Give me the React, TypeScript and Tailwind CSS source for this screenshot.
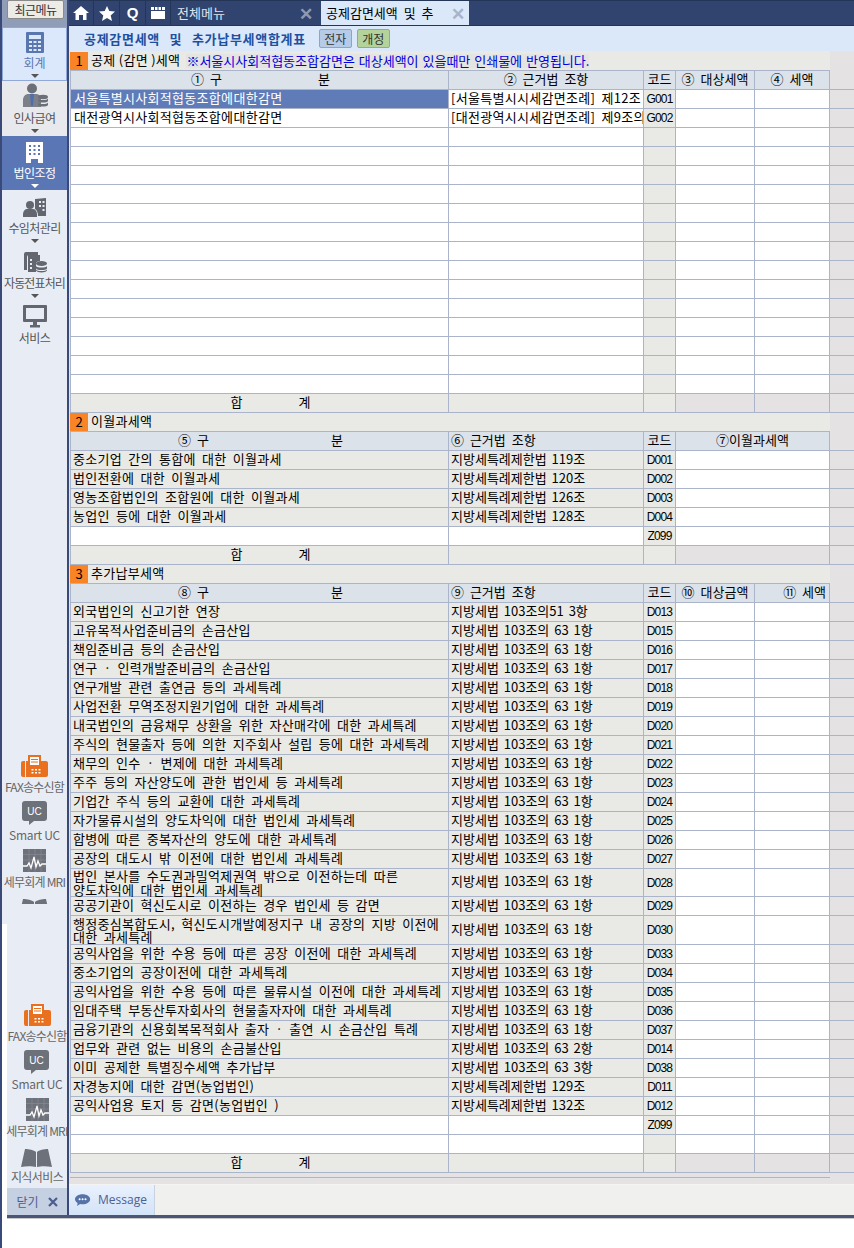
import type { ReactNode } from "react";

const font = "font-['Noto_Sans_CJK_KR','Liberation_Sans',sans-serif]";
const line = "border-[#aab4cb]";

const gamRows = [
  ["서울특별시사회적협동조합에대한감면", "[서울특별시시세감면조례] 제12조", "G001"],
  ["대전광역시사회적협동조합에대한감면", "[대전광역시시세감면조례] 제9조의", "G002"],
];

const iwolRows = [
  ["중소기업 간의 통합에 대한 이월과세", "지방세특례제한법 119조", "D001"],
  ["법인전환에 대한 이월과세", "지방세특례제한법 120조", "D002"],
  ["영농조합법인의 조합원에 대한 이월과세", "지방세특례제한법 126조", "D003"],
  ["농업인 등에 대한 이월과세", "지방세특례제한법 128조", "D004"],
];

const L1 = "지방세법 103조의 63 1항";

const chuRows: [string, string, string, number?][] = [
  ["외국법인의 신고기한 연장", "지방세법 103조의51 3항", "D013"],
  ["고유목적사업준비금의 손금산입", L1, "D015"],
  ["책임준비금 등의 손금산입", L1, "D016"],
  ["연구 · 인력개발준비금의 손금산입", L1, "D017"],
  ["연구개발 관련 출연금 등의 과세특례", L1, "D018"],
  ["사업전환 무역조정지원기업에 대한 과세특례", L1, "D019"],
  ["내국법인의 금융채무 상환을 위한 자산매각에 대한 과세특례", L1, "D020"],
  ["주식의 현물출자 등에 의한 지주회사 설립 등에 대한 과세특례", L1, "D021"],
  ["채무의 인수 · 변제에 대한 과세특례", L1, "D022"],
  ["주주 등의 자산양도에 관한 법인세 등 과세특례", L1, "D023"],
  ["기업간 주식 등의 교환에 대한 과세특례", L1, "D024"],
  ["자가물류시설의 양도차익에 대한 법인세 과세특례", L1, "D025"],
  ["합병에 따른 중복자산의 양도에 대한 과세특례", L1, "D026"],
  ["공장의 대도시 밖 이전에 대한 법인세 과세특례", L1, "D027"],
  ["법인 본사를 수도권과밀억제권역 밖으로 이전하는데 따른\n양도차익에 대한 법인세 과세특례", L1, "D028", 28],
  ["공공기관이 혁신도시로 이전하는 경우 법인세 등 감면", L1, "D029"],
  ["행정중심복합도시, 혁신도시개발예정지구 내 공장의 지방 이전에\n대한 과세특례", L1, "D030", 29],
  ["공익사업을 위한 수용 등에 따른 공장 이전에 대한 과세특례", L1, "D033"],
  ["중소기업의 공장이전에 대한 과세특례", L1, "D034"],
  ["공익사업을 위한 수용 등에 따른 물류시설 이전에 대한 과세특례", L1, "D035"],
  ["임대주택 부동산투자회사의 현물출자자에 대한 과세특례", L1, "D036"],
  ["금융기관의 신용회복목적회사 출자 · 출연 시 손금산입 특례", L1, "D037"],
  ["업무와 관련 없는 비용의 손금불산입", "지방세법 103조의 63 2항", "D014"],
  ["이미 공제한 특별징수세액 추가납부", "지방세법 103조의 63 3항", "D038"],
  ["자경농지에 대한 감면(농업법인)", "지방세특례제한법 129조", "D011"],
  ["공익사업용 토지 등 감면(농업법인 )", "지방세특례제한법 132조", "D012"],
];

function Cell({ children, className = "" }: { children?: ReactNode; className?: string }) {
  return (
    <div className={`flex items-center whitespace-nowrap border-r pb-[3px] leading-[14px] ${line} ${className}`}>
      {children}
    </div>
  );
}

function Code({ value, bg = "bg-[#e9eae5]" }: { value?: string; bg?: string }) {
  return (
    <Cell className={`${bg} justify-center pb-0! font-['Liberation_Sans',sans-serif] text-[12px] tracking-[-0.8px]`}>
      {value}
    </Cell>
  );
}

function Row({ children, h = 19 }: { children: ReactNode; h?: number }) {
  return (
    <div
      className={`grid grid-cols-[378px_195px_32px_79px_75px] border-b border-l ${line}`}
      style={{ height: h }}
    >
      {children}
    </div>
  );
}

function Section({ n, title, first, children }: { n: string; title: string; first?: boolean; children?: ReactNode }) {
  return (
    <div className={`flex w-[760px] border-b ${line} bg-[#e9eae5] ${first ? "h-[20px] pt-px" : "h-[19px]"}`}>
      <div className="flex w-[18px] items-center justify-center bg-[#f98425] text-[13px]">{n}</div>
      <div className="ml-[3px] leading-[16px] tracking-[0.3px] [word-spacing:0]">{title}</div>
      {children}
    </div>
  );
}

function HeadLabel({ left, right, gap }: { left: string; right: string; gap: string }) {
  return (
    <Cell className={`justify-center bg-[#dbe2ea] pl-[2px] ${gap}`}>
      <span>{left}</span>
      <span>{right}</span>
    </Cell>
  );
}

function TotalRow({ merged }: { merged?: boolean }) {
  return (
    <Row>
      <Cell className="justify-center gap-[56px] bg-[#e9eae5] pl-[22px]">
        <span>합</span>
        <span>계</span>
      </Cell>
      <Cell className="bg-[#e9eae5]" />
      <Cell className="bg-[#e9eae5]" />
      {merged ? (
        <Cell className="col-span-2 bg-[#e4e2e3]" />
      ) : (
        <>
          <Cell className="bg-[#e4e2e3]" />
          <Cell className="bg-[#e4e2e3]" />
        </>
      )}
    </Row>
  );
}

function Calculator() {
  return (
    <svg width="18" height="21" viewBox="0 0 18 21" fill="#5a76ae">
      <path d="M1 0h16a1 1 0 0 1 1 1v19a1 1 0 0 1-1 1H1a1 1 0 0 1-1-1V1a1 1 0 0 1 1-1z" />
      <rect x="3" y="3" width="12" height="4" fill="#dbe8fb" />
      <path
        fill="#dbe8fb"
        d="M3 9h3v2H3zM7.5 9h3v2h-3zM12 9h3v2h-3zM3 13h3v2H3zM7.5 13h3v2h-3zM12 13h3v2h-3zM3 17h3v2H3zM7.5 17h3v2h-3zM12 17h3v2h-3z"
      />
    </svg>
  );
}

function PersonCoins() {
  return (
    <svg width="26" height="25" viewBox="0 0 26 25">
      <circle cx="10" cy="5.5" r="5" fill="#6b6f78" />
      <path d="M1 24v-7c0-4 3-6 5-6h8c3 0 5 2 5 6v7z" fill="#7c8088" />
      <path d="M8 11h4l-1 12H9z" fill="#4d70ad" />
      <ellipse cx="21" cy="14" rx="5" ry="2.2" fill="#6b6f78" />
      <path d="M16 15.5c1 2 9 2 10 0v2.5c-1 2-9 2-10 0zM16 19.5c1 2 9 2 10 0V22c-1 2-9 2-10 0z" fill="#6b6f78" />
    </svg>
  );
}

function Building() {
  return (
    <svg width="17" height="21" viewBox="0 0 17 21" fill="#fff">
      <path d="M0 0h17v21h-5v-4H5v4H0z" />
      <path
        fill="#5a76b4"
        d="M3 3h2v2H3zM7.5 3h2v2h-2zM12 3h2v2h-2zM3 7h2v2H3zM7.5 7h2v2h-2zM12 7h2v2h-2zM3 11h2v2H3zM7.5 11h2v2h-2zM12 11h2v2h-2z"
      />
    </svg>
  );
}

function PersonBuilding() {
  return (
    <svg width="23" height="20" viewBox="0 0 23 20" fill="#63666e">
      <path d="M12 1l11-1v18H15c0-3-1-6-3-7z" />
      <path fill="#e8edf5" d="M16 3h2v2h-2zM19.5 3h2v2h-2zM16 7h2v2h-2zM19.5 7h2v2h-2zM19.5 11h2v2h-2z" />
      <circle cx="7" cy="7" r="4" />
      <path d="M0 19v-3c0-3 2-5 4-5h6c2 0 4 2 4 5v3z" />
    </svg>
  );
}

function FileDb() {
  return (
    <svg width="24" height="22" viewBox="0 0 24 22" fill="#63666e">
      <path d="M3 1h12v3H6a2 2 0 0 0-2 2v13H1V3a2 2 0 0 1 2-2z" />
      <path d="M5 4h12v6c-2 0-4 1-4 2v9H5z" />
      <path fill="#e8edf5" d="M7 8h2v2H7zM7 12h2v2H7zM7 16h2v2H7z" />
      <ellipse cx="18.5" cy="12.5" rx="5.5" ry="2.4" />
      <path d="M13 15c1 2 10 2 11 0v2.4c-1 2-10 2-11 0zM13 18.6c1 2 10 2 11 0v1c-1 2.6-10 2.6-11 0z" />
    </svg>
  );
}

function Monitor() {
  return (
    <svg width="24" height="23" viewBox="0 0 24 23">
      <path d="M1 0h22a1 1 0 0 1 1 1v15a1 1 0 0 1-1 1H1a1 1 0 0 1-1-1V1a1 1 0 0 1 1-1z" fill="#63666e" />
      <rect x="3" y="3" width="18" height="11" fill="#e8edf5" />
      <path d="M10 17h4v3h3v2.500H7V20h3z" fill="#63666e" />
    </svg>
  );
}

function Fax() {
  return (
    <svg width="27" height="22" viewBox="0 0 27 22">
      <path d="M0 8a2 2 0 0 1 2-2h2v16H2a2 2 0 0 1-2-2z" fill="#e8701f" />
      <path d="M5 6h2V0h13v6h5a2 2 0 0 1 2 2v12a2 2 0 0 1-2 2H5z" fill="#e8701f" />
      <path fill="#fff" d="M9 2h9v8H9zM10.500 14h2v1.500h-2zM14 14h2v1.500h-2zM17.500 14h2v1.500h-2zM10.500 17h2v1.500h-2zM14 17h2v1.500h-2zM17.500 17h2v1.500h-2z" />
      <path fill="#e8701f" d="M10 4h7v1h-7zM10 6.500h7v1h-7z" />
    </svg>
  );
}

function UcBubble() {
  return (
    <svg width="25" height="24" viewBox="0 0 25 24">
      <path d="M3 0h19a3 3 0 0 1 3 3v14a3 3 0 0 1-3 3H12l-5 4v-4H3a3 3 0 0 1-3-3V3a3 3 0 0 1 3-3z" fill="#6d717a" />
      <text x="12.500" y="14" textAnchor="middle" fontSize="10" fill="#fff" fontFamily="Liberation Sans">
        UC
      </text>
    </svg>
  );
}

function Mri() {
  return (
    <svg width="23" height="23" viewBox="0 0 23 23">
      <rect width="23" height="23" fill="#6d717a" />
      <path d="M0 5.500h23M0 11h23M0 17h23M6 0v23M12 0v23M18 0v23" stroke="#868a92" strokeWidth="0.7" />
      <path d="M0 17h4l2-3 2 5 3-11 2 10 2-6 2 5 2-2h4" fill="none" stroke="#fff" strokeWidth="1.300" />
    </svg>
  );
}

function Book({ clip }: { clip?: boolean }) {
  return (
    <div className={clip ? "h-[5px] overflow-hidden" : ""}>
      <svg width="31" height="18" viewBox="0 0 31 18" fill="#6d717a">
        <path d="M15 3c-2-2-7-3-11-3L0 18c5-1 11-1 15 0z" />
        <path d="M16 3c2-2 7-3 11-3l4 18c-5-1-11-1-15 0z" />
      </svg>
    </div>
  );
}

function NavItem({
  icon,
  label,
  arrow,
  className = "",
  arrowClass = "border-t-[#555]",
  text = "text-[#555] tracking-[-0.6px]",
}: {
  icon: ReactNode;
  label: string;
  arrow?: boolean;
  className?: string;
  arrowClass?: string;
  text?: string;
}) {
  return (
    <div className={`flex flex-col items-center ${className}`}>
      <div className="flex h-[25px] items-end justify-center">{icon}</div>
      <div className={`mt-[2px] whitespace-nowrap text-[12px] leading-[16px] ${text}`}>{label}</div>
      {arrow && <div className={`mt-[3px] h-0 w-0 border-x-[4px] border-t-[4px] border-x-transparent ${arrowClass}`} />}
    </div>
  );
}

function LowerTools({ compact }: { compact?: boolean }) {
  const grey = "text-[#666] tracking-[-0.8px]";
  return (
    <>
      <NavItem icon={<Fax />} label="FAX송수신함" text={grey} />
      <NavItem className="mt-[5px]" icon={<UcBubble />} label="Smart UC" text="text-[#666] tracking-[-0.3px]" />
      <NavItem className="mt-[4px]" icon={<Mri />} label="세무회계 MRI" text={grey} />
      {compact ? (
        <div className="mt-[9px] flex justify-center">
          <Book clip />
        </div>
      ) : (
        <NavItem className="mt-[3px]" icon={<Book />} label="지식서비스" text="text-[#666] tracking-[-0.6px]" />
      )}
    </>
  );
}

function TopIcons() {
  return (
    <div className="flex h-full text-white">
      <div className="flex w-[25px] items-center justify-center border-r border-[#233658]">
        <svg width="16" height="14" viewBox="0 0 16 14" fill="#fff">
          <path d="M8 0l8 7h-2.500v7H10V9H6v5H2.500V7H0z" />
        </svg>
      </div>
      <div className="flex w-[26px] items-center justify-center border-r border-[#233658]">
        <svg width="16" height="15" viewBox="0 0 16 15" fill="#fff">
          <path d="M8 0l2.300 5 5.700.6-4.300 3.800 1.300 5.600L8 12l-5 3 1.300-5.600L0 5.600 5.700 5z" />
        </svg>
      </div>
      <div className="flex w-[26px] items-center justify-center border-r border-[#233658] font-['Liberation_Sans',sans-serif] text-[15px] font-bold">
        Q
      </div>
      <div className="flex w-[25px] items-center justify-center border-r border-[#233658]">
        <svg width="14" height="12" viewBox="0 0 14 12" fill="#fff">
          <path d="M0 0h3v3H0zM4 0h2.500v3H4zM7.500 0H10v3H7.500zM11 0h3v3h-3zM0 4h14v8H0z" />
        </svg>
      </div>
    </div>
  );
}

export default function App() {
  return (
    <div className={`flex h-[1248px] w-[854px] overflow-hidden bg-white text-[13px] leading-[18px] text-black [word-spacing:3px] ${font}`}>
      <div className="w-[2px] shrink-0 bg-[#3a4a78]" />
      <div className="flex w-[852px] flex-col">
        <div className="flex h-[1215px]">
          {/* 왼쪽 메뉴 */}
          <div className="flex w-[65px] flex-col [word-spacing:0]">
            <div className="h-[924px] overflow-hidden bg-[#e8edf5]">
              <div className="flex h-[27px] justify-center bg-[#8f9db9]">
                <div className="ml-[2px] flex h-[19px] w-[57px] items-center justify-center rounded-[2px] border border-[#8a8a8a] bg-[#ecebe6] text-[12px] tracking-[-0.5px] text-[#333]">
                  최근메뉴
                </div>
              </div>
              <div className="h-[54px] border border-[#8fa8d8] bg-[#dbe8fb]">
                <NavItem icon={<Calculator />} label="회계" arrow text="text-[#5a76ae]" />
              </div>
              <div className="h-[55px] bg-[#e8e9ec] pt-[2px]">
                <NavItem icon={<PersonCoins />} label="인사급여" arrow />
              </div>
              <div className="h-[54px] bg-[#5a76b4] pt-[2px]">
                <NavItem
                  icon={<Building />}
                  label="법인조정"
                  arrow
                  arrowClass="border-t-white"
                  text="text-white tracking-[-0.6px]"
                />
              </div>
              <NavItem className="pt-[3px]" icon={<PersonBuilding />} label="수임처관리" arrow />
              <NavItem className="pt-[5px]" icon={<FileDb />} label="자동전표처리" arrow text="text-[#555] tracking-[-0.9px]" />
              <NavItem className="pt-[5px]" icon={<Monitor />} label="서비스" />
              <div className="mt-[406px]">
                <LowerTools compact />
              </div>
            </div>
            <div className="ml-[5px] flex flex-1 flex-col bg-[#e8edf5]">
              <div className="flex flex-1 flex-col items-center justify-end pb-[3px]">
                <LowerTools />
              </div>
              <div className="flex h-[27px] items-center justify-center gap-[9px] bg-[#c5d0e3] text-[12px] text-[#4a5f8f]">
                <span>닫기</span>
                <svg width="10" height="10" viewBox="0 0 10 10" stroke="#4a5f8f" strokeWidth="2.200">
                  <path d="M1 1l8 8M9 1l-8 8" />
                </svg>
              </div>
            </div>
          </div>
          <div className="w-[2px] bg-[#3a4a78]" />

          {/* 본문 */}
          <div className="flex w-[785px] flex-col">
            <div className="flex h-[26px] border-y border-[#233658] bg-[#30446f]">
              <TopIcons />
              <div className="flex w-[150px] items-center justify-between pl-[6px] pr-[8px] text-[#dfe5f0]">
                <span>전체메뉴</span>
                <span className="text-[17px] font-bold text-[#8c99b4]">✕</span>
              </div>
              <div className="flex w-[148px] items-center justify-between bg-[#dbe8f9] pl-[5px] pr-[4px]">
                <span>공제감면세액 및 추</span>
                <span className="text-[17px] font-bold text-[#aab4c8]">✕</span>
              </div>
            </div>
            <div className="flex h-[25px] items-center bg-[#dbe8f9] pl-[15px]">
              <span className="font-bold tracking-[0.7px] text-[#1f50a0] [word-spacing:6px]">공제감면세액 및 추가납부세액합계표</span>
              <div className="ml-[13px] flex h-[19px] w-[33px] items-center justify-center rounded-[2px] border border-[#8fa3c4] bg-[#b5cbe8] text-[12px] text-[#333]">
                전자
              </div>
              <div className="ml-[5px] flex h-[19px] w-[33px] items-center justify-center rounded-[2px] border border-[#8fb07c] bg-[#b4d29b] text-[12px] text-[#333]">
                개정
              </div>
            </div>

            <div className="flex flex-1 flex-col bg-[#e4e2e3] pl-px">
              <Section n="1" title="공제 (감면 )세액" first>
                <div className="ml-[6px] h-[14px] self-center bg-[#e4e4e2] leading-[14px] text-[#0000e0] [word-spacing:1px]">
                  ※서울시사회적협동조합감면은 대상세액이 있을때만 인쇄물에 반영됩니다.
                </div>
              </Section>
              <Row>
                <HeadLabel left="① 구" right="분" gap="gap-[96px]" />
                <Cell className="justify-center bg-[#dbe2ea]">② 근거법 조항</Cell>
                <Cell className="justify-center bg-[#dbe2ea]">코드</Cell>
                <Cell className="justify-center bg-[#dbe2ea]">③ 대상세액</Cell>
                <Cell className="justify-center bg-[#dbe2ea]">④ 세액</Cell>
              </Row>
              {Array.from({ length: 16 }, (_, i) => {
                const r = gamRows[i];
                return (
                  <Row key={i}>
                    <Cell className={`pl-[3px] tracking-[0.3px] ${i === 0 ? "bg-[#5f7cb8] text-white" : "bg-white"}`}>{r?.[0]}</Cell>
                    <Cell className="overflow-x-clip bg-white pl-[2px] tracking-[0.3px]">{r?.[1]}</Cell>
                    <Code value={r?.[2]} />
                    <Cell className="bg-white" />
                    <Cell className="bg-white" />
                  </Row>
                );
              })}
              <TotalRow />

              <Section n="2" title="이월과세액" />
              <Row>
                <HeadLabel left="⑤ 구" right="분" gap="gap-[122px]" />
                <Cell className="bg-[#dbe2ea] pl-[2px]">⑥ 근거법 조항</Cell>
                <Cell className="justify-center bg-[#dbe2ea]">코드</Cell>
                <Cell className="col-span-2 justify-center bg-[#dbe2ea]">⑦이월과세액</Cell>
              </Row>
              {iwolRows.map((r) => (
                <Row key={r[2]}>
                  <Cell className="bg-[#e9eae5] pl-[2px] tracking-[0.3px]">{r[0]}</Cell>
                  <Cell className="bg-[#e9eae5] pl-[2px] [word-spacing:2px]">{r[1]}</Cell>
                  <Code value={r[2]} />
                  <Cell className="col-span-2 bg-white" />
                </Row>
              ))}
              <Row>
                <Cell className="bg-white" />
                <Cell className="bg-white" />
                <Code value="Z099" />
                <Cell className="col-span-2 bg-white" />
              </Row>
              <TotalRow merged />

              <Section n="3" title="추가납부세액" />
              <Row>
                <HeadLabel left="⑧ 구" right="분" gap="gap-[122px]" />
                <Cell className="bg-[#dbe2ea] pl-[2px]">⑨ 근거법 조항</Cell>
                <Cell className="justify-center bg-[#dbe2ea]">코드</Cell>
                <Cell className="justify-center bg-[#dbe2ea]">⑩ 대상금액</Cell>
                <Cell className="justify-end bg-[#dbe2ea] pr-[3px]">⑪ 세액</Cell>
              </Row>
              {chuRows.map((r) => (
                <Row key={r[2]} h={r[3] ?? 19}>
                  <Cell className={`whitespace-pre bg-[#e9eae5] pl-[2px] tracking-[0.3px] ${r[3] ? "pb-0! leading-[13.5px]!" : ""}`}>{r[0]}</Cell>
                  <Cell className="bg-[#e9eae5] pl-[2px] [word-spacing:2px]">{r[1]}</Cell>
                  <Code value={r[2]} />
                  <Cell className="bg-white" />
                  <Cell className="bg-white" />
                </Row>
              ))}
              <Row>
                <Cell className="bg-white" />
                <Cell className="bg-white" />
                <Code value="Z099" />
                <Cell className="bg-white" />
                <Cell className="bg-white" />
              </Row>
              <Row>
                <Cell className="bg-white" />
                <Cell className="bg-white" />
                <Code />
                <Cell className="bg-white" />
                <Cell className="bg-white" />
              </Row>
              <TotalRow />

              <div className="mt-[4px] w-[760px] border-t border-[#b0b5c4]" />
              <div className="mt-[6px] -ml-px border-t border-[#f4f4f4] bg-[#f0f0ee]">
                <div className="flex h-[30px] w-[86px] items-center gap-[7px] border-r border-[#c8d2e2] bg-gradient-to-b from-[#e9f1fd] to-[#d3e3f8] pl-[6px] font-['Open_Sans',sans-serif] text-[12px] text-[#4b6290]">
                  <svg width="16" height="13" viewBox="0 0 19 15" fill="#5673a8">
                    <path d="M9 0c5 0 9 2.700 9 6s-4 6-9 6c-1 0-2-.1-3-.4L2.500 14l.6-3.600C1.200 9.300 0 7.700 0 6c0-3.300 4-6 9-6z" />
                    <circle cx="5.500" cy="6" r="1.200" fill="#fff" />
                    <circle cx="9" cy="6" r="1.200" fill="#fff" />
                    <circle cx="12.500" cy="6" r="1.200" fill="#fff" />
                  </svg>
                  Message
                </div>
              </div>
            </div>
          </div>
        </div>
        <div className="ml-[5px] h-[3px] bg-[#4a5675]" />
        <div className="ml-[5px] h-px bg-[#c8c8c8]" />
      </div>
    </div>
  );
}
